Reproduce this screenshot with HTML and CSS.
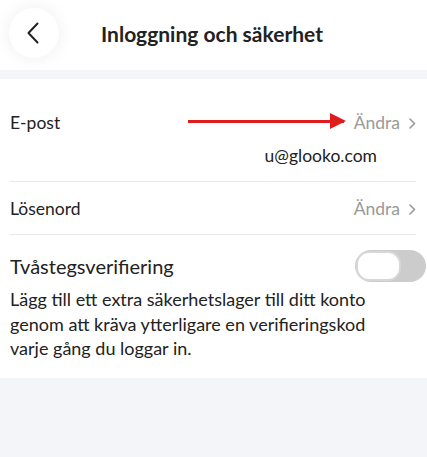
FILE: index.html
```html
<!DOCTYPE html>
<html lang="sv">
<head>
    <meta charset="UTF-8">
    <meta name="viewport" content="width=device-width, initial-scale=1.0">
    <title>Inloggning och säkerhet</title>
    <link rel="stylesheet" href="styles.css">
</head>
<body>
    <div class="header">
        <div class="back">
            <svg width="14" height="22" viewBox="0 0 14 22"><path d="M11.5 1.5 L2.5 11 L11.5 20.5" fill="none" stroke="#222" stroke-width="2" stroke-linecap="round" stroke-linejoin="round"/></svg>
        </div>
        <h1 class="title">Inloggning och säkerhet</h1>
    </div>
    <div class="band"></div>
    <div class="content">
        <div class="row email-row">
            <div class="row-top">
                <span class="label">E-post</span>
                <div class="arrow"></div>
                <span class="action">Ändra <svg class="chev" width="7" height="11" viewBox="0 0 7 11"><path d="M1 1 L5.5 5.5 L1 10" fill="none" stroke="#999" stroke-width="1.6" stroke-linecap="round" stroke-linejoin="round"/></svg></span>
            </div>
            <div class="email">u@glooko.com</div>
        </div>
        <div class="row">
            <div class="row-top">
                <span class="label">Lösenord</span>
                <span class="action">Ändra <svg class="chev" width="7" height="11" viewBox="0 0 7 11"><path d="M1 1 L5.5 5.5 L1 10" fill="none" stroke="#999" stroke-width="1.6" stroke-linecap="round" stroke-linejoin="round"/></svg></span>
            </div>
        </div>
        <div class="twofa">
            <div class="twofa-top">
                <span class="twofa-label">Tvåstegsverifiering</span>
                <div class="toggle"><div class="knob"></div></div>
            </div>
            <p class="desc">Lägg till ett extra säkerhetslager till ditt konto genom att kräva ytterligare en verifieringskod varje gång du loggar in.</p>
        </div>
    </div>
</body>
</html>
```

FILE: styles.css
```css
body {
    margin: 0;
    font-family: Lato, "Open Sans", sans-serif;
    background-color: #f4f5f8;
    color: #222;
    overflow: hidden;
}

.header {
    background-color: #fff;
    height: 70px;
    display: flex;
    align-items: center;
    padding-left: 9px;
    box-sizing: border-box;
}

.back {
    width: 50px;
    height: 50px;
    border-radius: 50%;
    background-color: #fff;
    box-shadow: 0 0 18px rgba(0, 0, 0, 0.07);
    display: flex;
    align-items: center;
    justify-content: center;
    margin-top: -4px;
}

.back svg {
    margin-left: -2px;
}

.title {
    margin: -4px 0 0 42px;
    font-size: 21px;
    font-weight: 700;
    color: #222;
}

.band {
    height: 9px;
    background-color: #f4f5f8;
}

.content {
    background-color: #fff;
    padding: 0 11px 0 10px;
    height: 299px;
    box-sizing: border-box;
}

.row {
    border-bottom: 1px solid #e7e7ef;
}

.row-top {
    display: flex;
    align-items: center;
    height: 52px;
}

.email-row {
    padding-top: 30px;
    padding-bottom: 4px;
}

.email-row .row-top {
    height: 26px;
}

.label {
    font-size: 17.5px;
    flex: 1;
}

.email-row .label {
    flex: 0 0 auto;
}

.arrow {
    position: relative;
    width: 156px;
    height: 3px;
    background-color: #e01b1b;
    margin-left: auto;
    margin-right: 10px;
    margin-top: -2px;
}

.arrow::after {
    content: "";
    position: absolute;
    right: -2px;
    top: -7px;
    border-left: 16px solid #e01b1b;
    border-top: 8.5px solid transparent;
    border-bottom: 8.5px solid transparent;
}

.action {
    font-size: 17.5px;
    color: #999;
    display: flex;
    align-items: center;
}

.chev {
    margin-left: 9px;
    margin-top: 2px;
}

.email {
    text-align: right;
    font-size: 17.5px;
    padding-right: 39px;
    height: 42px;
    line-height: 42px;
}

.twofa-top {
    display: flex;
    align-items: center;
    justify-content: space-between;
    padding-top: 18px;
    height: 26px;
}

.twofa-label {
    font-size: 20px;
}

.toggle {
    width: 71px;
    height: 32px;
    border-radius: 16px;
    background-color: #cccccc;
    margin-right: -10px;
    position: relative;
}

.knob {
    position: absolute;
    left: 1px;
    top: 1px;
    width: 41px;
    height: 26px;
    border-radius: 13px;
    background-color: #fff;
    border: 2px solid #d7d7d7;
}

.desc {
    margin: 8px 0 0;
    padding-right: 36px;
    font-size: 18px;
    line-height: 24.5px;
}
```
